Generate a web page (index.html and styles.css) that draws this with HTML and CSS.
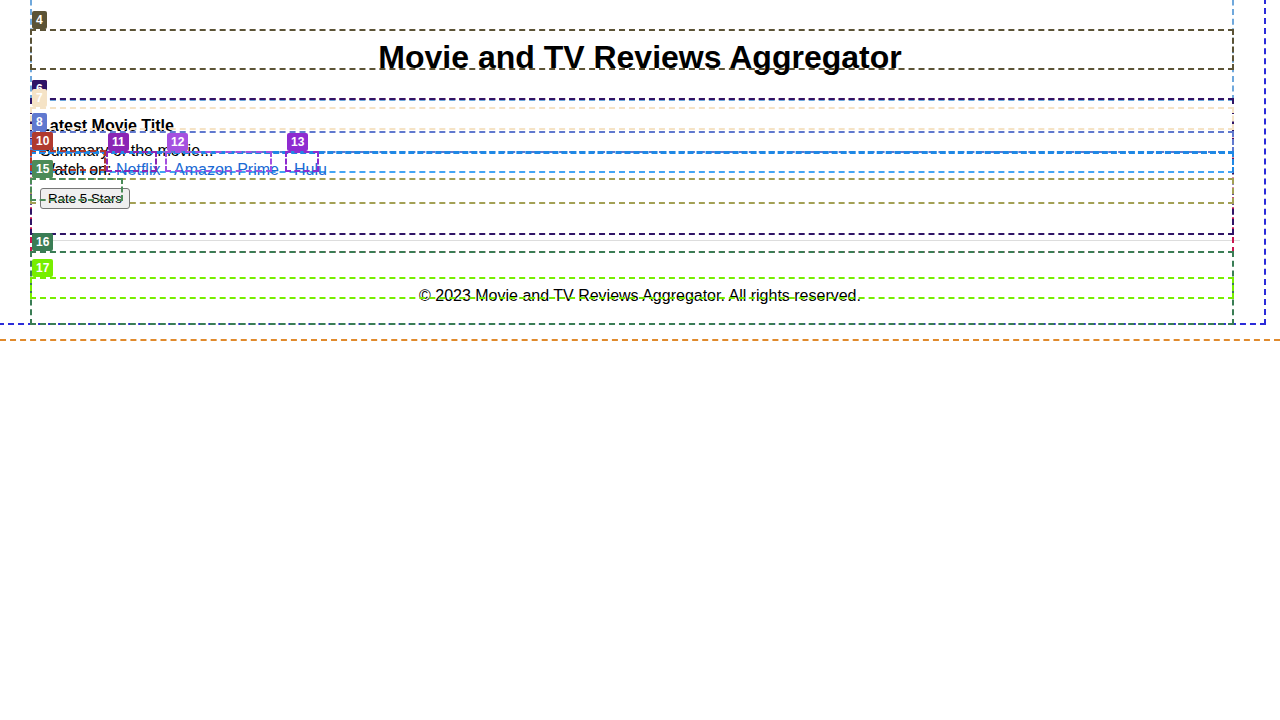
FILE: index.html
```html
<!DOCTYPE html>
<html lang="en">
<head>
<meta charset="utf-8">
<title>Movie and TV Reviews Aggregator</title>
<link rel="stylesheet" href="styles.css">
</head>
<body>
<div class="page">
  <div class="bodybox">
    <header class="ov o3" data-n="3">
      <h1 class="ov o4 site-title" data-n="4">Movie and TV Reviews Aggregator</h1>
    </header>
    <main class="ov o5" data-n="5">
      <article class="ov o6 movie" data-n="6">
        <h2 class="ov o7 movie-title" data-n="7">Latest Movie Title</h2>
        <p class="ov o8 summary" data-n="8">Summary of the movie...</p>
        <p class="ov o9 watch" data-n="9">
          <span class="ov o10 label" data-n="10">Watch on:</span>
          <a class="ov o11 link l-netflix" data-n="11" href="#">Netflix</a>
          <a class="ov o12 link l-amazon" data-n="12" href="#">Amazon Prime</a>
          <a class="ov o13 link l-hulu" data-n="13" href="#">Hulu</a>
        </p>
        <div class="ov o14 rate" data-n="14">
          <div class="ov o15 btnbox" data-n="15"><button class="rate-btn" type="button">Rate 5 Stars</button></div>
        </div>
      </article>
      <hr class="sep">
    </main>
    <footer class="ov o16 foot" data-n="16">
      <p class="ov o17 copy" data-n="17">© 2023 Movie and TV Reviews Aggregator. All rights reserved.</p>
    </footer>
  </div>
</div>
</body>
</html>
```
FILE: styles.css
```css
html, body {
  margin: 0;
  padding: 0;
  background: #ffffff;
}

body {
  font-family: "Liberation Sans", Arial, sans-serif;
  font-size: 16px;
  color: #000000;
}

.page {
  display: flow-root;
  height: 341px;
  box-sizing: border-box;
  border-bottom: 2px dashed #e08a2c;
}

.bodybox {
  display: flow-root;
  position: relative;
  box-sizing: border-box;
  width: 1268px;
  height: 327px;
  margin: -2px 0 0 -2px;
  padding-left: 32px;
  border-right: 2px dashed #2b2bd9;
  border-bottom: 2px dashed #2b2bd9;
}

/* overlay boxes: the dashed frame (::before) and the number badge (::after) */
.ov {
  display: flow-root;
  position: relative;
  box-sizing: border-box;
  margin: 0;
}

.ov::before {
  content: "";
  position: absolute;
  inset: 0;
  border: 2px dashed var(--c);
  pointer-events: none;
}

.ov::after {
  content: attr(data-n);
  position: absolute;
  left: 2px;
  bottom: 100%;
  z-index: var(--z);
  padding: 0 4px;
  height: 18px;
  background: var(--c);
  color: #ffffff;
  font: bold 12px/18px "Liberation Sans", Arial, sans-serif;
  border-radius: 2px;
  white-space: nowrap;
}

.o3 { --c: #6fa8dc; --z: 10; }
.o4 { --c: #5b5336; --z: 11; }
.o5 { --c: #c8174f; --z: 11; }
.o6 { --c: #2f1466; --z: 12; }
.o7 { --c: #f5e3c6; --z: 13; }
.o8 { --c: #6079cf; --z: 13; }
.o9 { --c: #1e88e5; --z: 13; }
.o10 { --c: #b03a2e; --z: 14; }
.o11 { --c: #8b25b5; --z: 14; }
.o12 { --c: #a550e0; --z: 14; }
.o13 { --c: #8f2bd0; --z: 14; }
.o14 { --c: #a3a055; --z: 13; }
.o15 { --c: #4b8b58; --z: 14; }
.o16 { --c: #3a7d55; --z: 11; }
.o17 { --c: #77ee00; --z: 12; }

/* header */
.o3 {
  width: 1204px;
  height: 111px;
  margin-top: -8px;
}

.site-title {
  width: 1204px;
  height: 41px;
  margin-top: 39px;
  padding: 10px 0 0 16px;
  font-size: 32px;
  font-weight: bold;
  line-height: 37px;
  text-align: center;
  white-space: nowrap;
}

/* main */
.o5 {
  width: 1204px;
  height: 155px;
  margin-top: -3px;
}

.movie {
  width: 1204px;
  height: 137px;
}

.movie-title {
  height: 23px;
  margin-top: 9px;
  padding: 10px 0 0 10px;
  font-size: 16px;
  font-weight: bold;
  line-height: 18px;
  white-space: nowrap;
}

.summary {
  height: 22px;
  margin-top: 1px;
  padding: 11px 0 0 10px;
  line-height: 18px;
  white-space: nowrap;
}

.watch {
  display: flex;
  align-items: flex-start;
  height: 22px;
  margin-top: -2px;
  line-height: 18px;
  white-space: nowrap;
}

.watch::before {
  border-width: 3px 2px 2px 2px;
  border-bottom-color: #42a5f5;
}

.label {
  flex: none;
  width: 76px;
  height: 21px;
  margin-top: -1px;
  padding: 11px 0 0 10px;
}

.link {
  flex: none;
  height: 21px;
  padding-top: 10px;
  color: #1a6ad4;
  text-decoration: none;
}

.l-netflix { width: 51px; padding-left: 10px; }
.l-amazon { width: 107px; margin-left: 8px; padding-left: 9px; }
.l-hulu { width: 34px; margin-left: 13px; padding-left: 9px; }

.rate {
  height: 26px;
  margin-top: 5px;
}

.btnbox {
  width: 93px;
  height: 23px;
}

.rate-btn {
  display: block;
  box-sizing: border-box;
  width: 90px;
  height: 21px;
  margin: 10px 0 0 10px;
  padding: 1px 6px;
  background: #efefef;
  border: 1px solid #767676;
  border-radius: 3px;
  color: #000000;
  font: 13.333px/17px "Liberation Sans", Arial, sans-serif;
  white-space: nowrap;
}

.sep {
  width: 1200px;
  height: 0;
  margin: 5px 0 0 10px;
  border: 0;
  border-top: 1px solid #dddddd;
}

/* footer */
.foot {
  width: 1204px;
  height: 74px;
  margin-top: -2px;
}

.copy {
  height: 22px;
  margin-top: 26px;
  padding: 10px 0 0 16px;
  line-height: 18px;
  text-align: center;
  white-space: nowrap;
}
```
